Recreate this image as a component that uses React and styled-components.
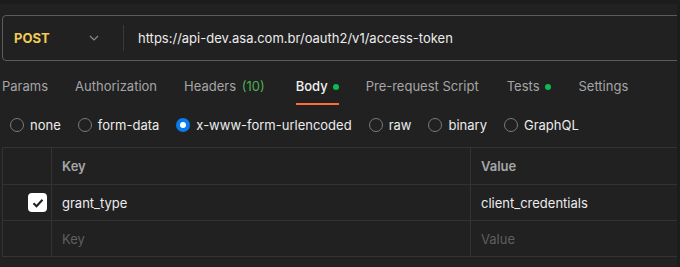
import { createGlobalStyle, styled } from "styled-components";

const Global = createGlobalStyle`
  html, body { margin: 0; padding: 0; background: #212121; }
  body { font-family: Inter, "Noto Sans", sans-serif; overflow: hidden; }
`;

const Page = styled.div`
  width: 680px;
  height: 267px;
  background: #212121;
  border-top: 4px solid #1b1c1e;
  box-sizing: border-box;
  overflow: hidden;
  position: relative;
`;

const RightEdge = styled.div`
  position: absolute;
  top: 0;
  right: 0;
  width: 3px;
  height: 100%;
  background: #1b1c1e;
`;

const UrlBar = styled.div`
  display: flex;
  align-items: center;
  margin: 11px 0 0 2px;
  width: 700px;
  height: 46px;
  border: 1px solid #5c5c5c;
  border-radius: 4px;
  box-sizing: border-box;
`;

const Method = styled.div`
  display: flex;
  align-items: center;
  justify-content: space-between;
  width: 108px;
  padding: 0 12px 0 11px;
  box-sizing: border-box;
  color: #f2cb55;
  font-weight: 700;
  font-size: 13px;
`;

const Divider = styled.div`
  width: 1px;
  height: 26px;
  background: #3a3a3a;
  margin-left: 12px;
`;

const Url = styled.div`
  color: #ececec;
  font-size: 13px;
  margin-left: 14px;
`;

const Tabs = styled.div`
  display: flex;
  gap: 27px;
  margin: 16px 0 0 2px;
  height: 28px;
`;

const Tab = styled.div`
  display: flex;
  align-items: flex-start;
  gap: 5px;
  font-size: 13px;
  font-weight: ${(p) => (p.$active ? 500 : 400)};
  color: ${(p) => (p.$active ? "#f0f0f0" : "#a6a6a6")};
  height: 100%;
  box-sizing: border-box;
  border-bottom: 2px solid ${(p) => (p.$active ? "#ff6c37" : "transparent")};
  line-height: 18px;
  padding-right: ${(p) => p.$extra || 0}px;
`;

const Count = styled.span`
  color: #4caf50;
  margin-left: 2px;
`;

const Dot = styled.span`
  width: 6px;
  height: 6px;
  border-radius: 50%;
  background: #0cbb52;
  margin-top: 7px;
`;

const Radios = styled.div`
  display: flex;
  align-items: center;
  gap: 17px;
  margin: 10px 0 0 10px;
  height: 20px;
`;

const RadioItem = styled.label`
  display: flex;
  align-items: center;
  gap: 6px;
  color: #ececec;
  font-size: 13px;
`;

const Circle = styled.span`
  width: 14px;
  height: 14px;
  box-sizing: border-box;
  border-radius: 50%;
  border: ${(p) => (p.$on ? "4px solid #097bed" : "1px solid #7a7a7a")};
  background: ${(p) => (p.$on ? "#ffffff" : "transparent")};
`;

const Table = styled.div`
  margin: 12px 0 0 2px;
  width: 700px;
  border: 1px solid #333333;
  border-right: none;
`;

const Row = styled.div`
  display: grid;
  grid-template-columns: 48px 419px 1fr;
  height: 36px;
  box-sizing: border-box;
  border-top: ${(p) => (p.$first ? "none" : "1px solid #333333")};
`;

const Cell = styled.div`
  display: flex;
  align-items: center;
  padding-left: 10px;
  font-size: 13px;
  border-left: 1px solid #333333;
  color: ${(p) =>
    p.$head ? "#a6a6a6" : p.$placeholder ? "#5f5f5f" : "#ececec"};
  font-weight: ${(p) => (p.$head ? 600 : 400)};
`;

const CheckCell = styled.div`
  display: flex;
  align-items: center;
  justify-content: flex-end;
  padding-right: 4px;
`;

const Checkbox = styled.span`
  width: 19px;
  height: 19px;
  border-radius: 4px;
  background: #ffffff;
  display: flex;
  align-items: center;
  justify-content: center;
`;

const radios = ["none", "form-data", "x-www-form-urlencoded", "raw", "binary", "GraphQL"];

export default function App() {
  return (
    <Page>
      <Global />
      <UrlBar>
        <Method>
          POST
          <svg width="10" height="6" viewBox="0 0 10 6" fill="none">
            <path d="M1 1l4 4 4-4" stroke="#8a8a8a" strokeWidth="1.2" />
          </svg>
        </Method>
        <Divider />
        <Url>https://api-dev.asa.com.br/oauth2/v1/access-token</Url>
      </UrlBar>
      <Tabs>
        <Tab>Params</Tab>
        <Tab>Authorization</Tab>
        <Tab $extra={4}>
          <span>
            Headers <Count>(10)</Count>
          </span>
        </Tab>
        <Tab $active>
          Body <Dot />
        </Tab>
        <Tab $extra={1}>Pre-request Script</Tab>
        <Tab $extra={1}>
          Tests <Dot />
        </Tab>
        <Tab>Settings</Tab>
      </Tabs>
      <Radios>
        {radios.map((r) => (
          <RadioItem key={r}>
            <Circle $on={r === "x-www-form-urlencoded"} />
            {r}
          </RadioItem>
        ))}
      </Radios>
      <Table>
        <Row $first>
          <CheckCell />
          <Cell $head>Key</Cell>
          <Cell $head>Value</Cell>
        </Row>
        <Row>
          <CheckCell>
            <Checkbox>
              <svg width="12" height="10" viewBox="0 0 12 10" fill="none">
                <path d="M1.5 5.2l3 3 6-6.5" stroke="#1f1f1f" strokeWidth="2" />
              </svg>
            </Checkbox>
          </CheckCell>
          <Cell>grant_type</Cell>
          <Cell>client_credentials</Cell>
        </Row>
        <Row>
          <CheckCell />
          <Cell $placeholder>Key</Cell>
          <Cell $placeholder>Value</Cell>
        </Row>
      </Table>
      <RightEdge />
    </Page>
  );
}
